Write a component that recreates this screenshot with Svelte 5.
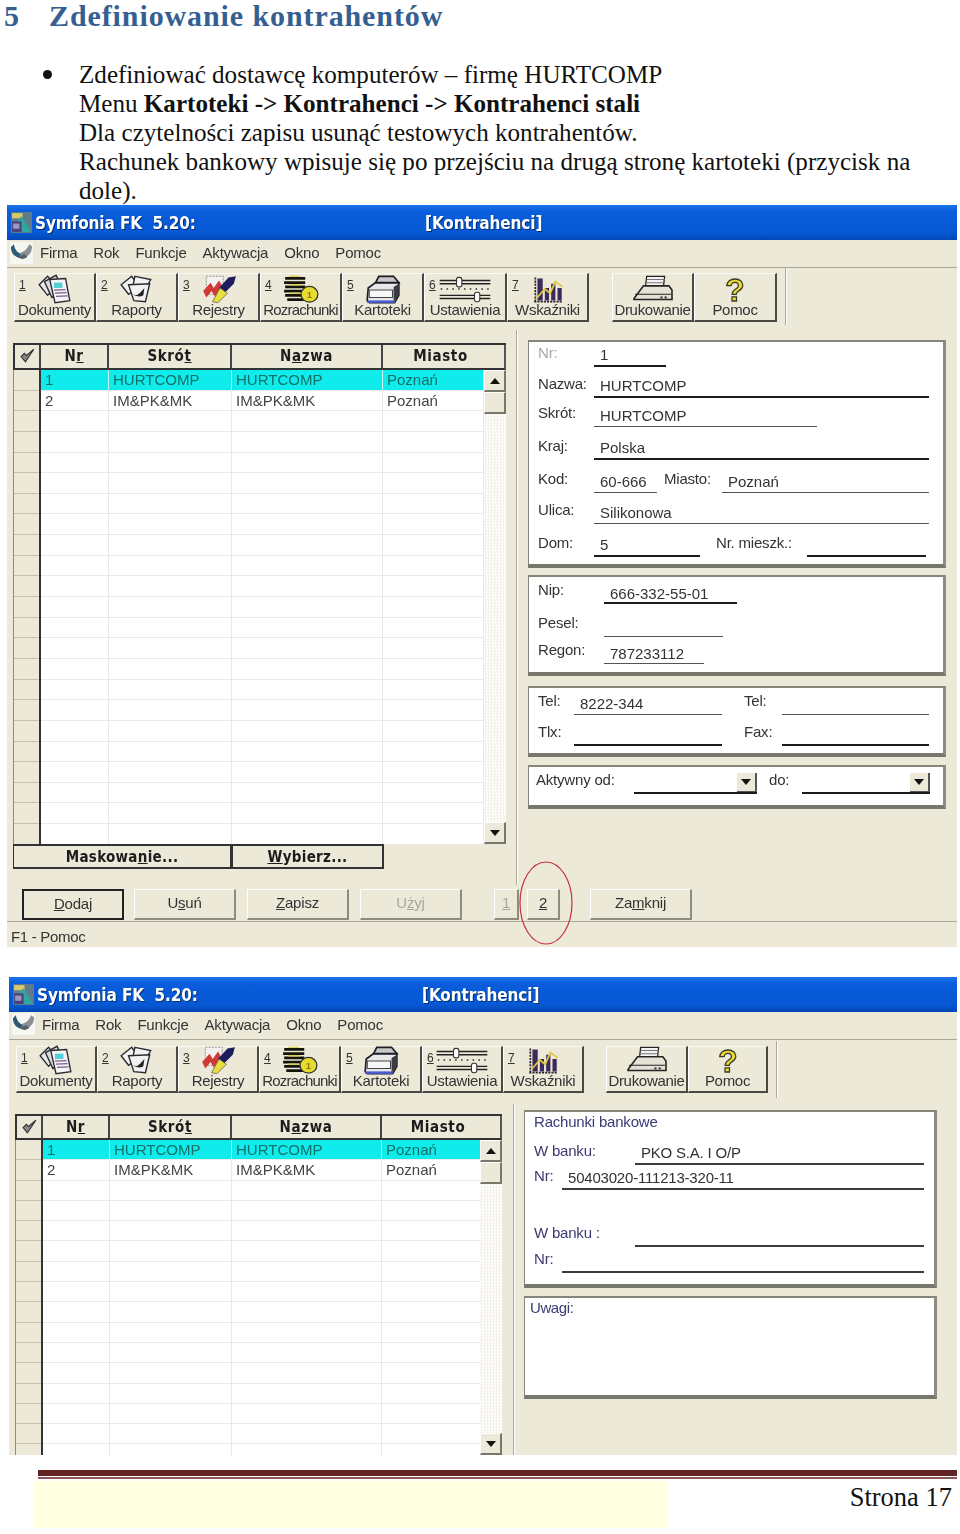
<script>
  const menu = ['Firma', 'Rok', 'Funkcje', 'Aktywacja', 'Okno', 'Pomoc'];

  const tools1 = [
    { n: '1', label: 'Dokumenty', icon: 'docs', w: 82 },
    { n: '2', label: 'Raporty', icon: 'reports', w: 82 },
    { n: '3', label: 'Rejestry', icon: 'pen', w: 82 },
    { n: '4', label: 'Rozrachunki', icon: 'coins', w: 82, narrow: true },
    { n: '5', label: 'Kartoteki', icon: 'cards', w: 82 },
    { n: '6', label: 'Ustawienia', icon: 'sliders', w: 83 },
    { n: '7', label: 'Wskaźniki', icon: 'chart', w: 82 }
  ];
  const extras1 = [
    { label: 'Drukowanie', icon: 'printer', w: 82 },
    { label: 'Pomoc', icon: 'help', w: 83 }
  ];
  const tools2 = tools1.map((t, i) => ({ ...t, w: i === 3 ? 82 : 81 }));
  const extras2 = [
    { label: 'Drukowanie', icon: 'printer', w: 82 },
    { label: 'Pomoc', icon: 'help', w: 80 }
  ];

  const rows = [
    { nr: '1', skrot: 'HURTCOMP', nazwa: 'HURTCOMP', miasto: 'Poznań', on: true },
    { nr: '2', skrot: 'IM&PK&MK', nazwa: 'IM&PK&MK', miasto: 'Poznań' },
    ...Array.from({ length: 21 }, () => ({ nr: '', skrot: '', nazwa: '', miasto: '' }))
  ];

  // each row: height up to the field line, then label/field pairs from the left
  const addressRows = [
    { h: 25, items: [{ label: 'Nr:', w: 58, dim: true }, { value: '1', w: 72 }] },
    { h: 31, items: [{ label: 'Nazwa:', w: 58 }, { value: 'HURTCOMP', w: 335 }] },
    { h: 29, items: [{ label: 'Skrót:', w: 58 }, { value: 'HURTCOMP', w: 223, soft: true }] },
    { h: 33, items: [{ label: 'Kraj:', w: 58 }, { value: 'Polska', w: 335 }] },
    { h: 33, items: [{ label: 'Kod:', w: 58 }, { value: '60-666', w: 63, soft: true }, { label: 'Miasto:', w: 65, pad: 7 }, { value: 'Poznań', w: 207, soft: true }] },
    { h: 31, items: [{ label: 'Ulica:', w: 58 }, { value: 'Silikonowa', w: 335, soft: true }] },
    { h: 33, items: [{ label: 'Dom:', w: 58 }, { value: '5', w: 106 }, { label: 'Nr. mieszk.:', w: 107, pad: 16 }, { value: '', w: 119 }] }
  ];
  const taxRows = [
    { h: 27, items: [{ label: 'Nip:', w: 68 }, { value: '666-332-55-01', w: 133, tight: true }] },
    { h: 33, items: [{ label: 'Pesel:', w: 68 }, { value: '', w: 119, soft: true }] },
    { h: 27, items: [{ label: 'Regon:', w: 68 }, { value: '787233112', w: 100, soft: true, tight: true }] }
  ];
  const phoneRows = [
    { h: 27, items: [{ label: 'Tel:', w: 38 }, { value: '8222-344', w: 148, soft: true }, { label: 'Tel:', w: 60, pad: 22 }, { value: '', w: 147, soft: true }] },
    { h: 31, items: [{ label: 'Tlx:', w: 38 }, { value: '', w: 148 }, { label: 'Fax:', w: 60, pad: 22 }, { value: '', w: 147 }] }
  ];
  const activeRows = [
    { h: 27, items: [{ label: 'Aktywny od:', w: 98, pad: 0 }, { value: '', w: 123, drop: true }, { label: 'do:', w: 45, pad: 12 }, { value: '', w: 128, drop: true }] }
  ];
  const bankRows = [
    { h: 53, items: [{ label: 'W banku:', w: 103 }, { value: 'PKO S.A. I O/P', w: 289 }] },
    { h: 25, items: [{ label: 'Nr:', w: 30 }, { value: '50403020-111213-320-11', w: 362 }] },
    { h: 57, items: [{ label: 'W banku :', w: 103 }, { value: '', w: 289 }] },
    { h: 26, items: [{ label: 'Nr:', w: 30 }, { value: '', w: 362 }] }
  ];
</script>

{#snippet icon(name)}
  <svg class="tool-icon" viewBox="0 0 36 28" aria-hidden="true">
    {#if name === 'docs'}
      <g stroke="#2a2a33" stroke-width="1.3">
        <path d="M3 10 11 2 19 12 11 20Z" fill="#e8e8e8" />
        <path d="M8 7 19 1 26 16 15 22Z" fill="#dcdcdc" />
        <path d="M13 5 28 4 32 25 18 27Z" fill="#f4f4f4" />
      </g>
      <path d="M17 8h8v5h-8z" fill="#4fd0d6" />
      <path d="M17 15l11-.5M18 18l11-.5M19 21l11-.5" stroke="#7a5a8c" stroke-width="1.2" />
    {:else if name === 'reports'}
      <g stroke="#2a2a33" stroke-width="1.3" fill="#f2f2f0">
        <path d="M3 10 13 2 20 12 10 19Z" />
        <path d="M16 2 31 5 26 14 14 12Z" />
        <path d="M10 10 30 9 26 26 15 25Z" />
      </g>
      <path d="M14 19c4 2 6 0 11-6l-1 7c-3 2-7 1-10-1Z" fill="#222" />
    {:else if name === 'pen'}
      <path d="M6 2h16v17H6z" fill="#f6f0f0" stroke="#999" stroke-dasharray="2 1" />
      <path d="M3 16 10 8l3 5 5-7 3 5-7 10-3-5-5 6Z" fill="#cf3a36" />
      <path d="M18 13 27 3 34 2 32 9 23 18Z" fill="#1d1d5c" />
      <path d="M12 26 19 13 26 18 17 27Z" fill="#e8df3c" stroke="#555" stroke-width=".7" />
    {:else if name === 'coins'}
      <g stroke="#14140a" stroke-width="2.6">
        <path d="M3 4h19M2 8h20M3 12h19M2 16h20M3 20h19M5 24h16" />
      </g>
      <path d="M7 2h10M7 10h11M7 18h10" stroke="#d7cf50" stroke-width="1.3" />
      <ellipse cx="26" cy="19" rx="8" ry="7.500" fill="#e6dc2e" stroke="#333" stroke-width="1.2" />
      <text x="26" y="23" class="coin">1</text>
    {:else if name === 'cards'}
      <path d="M3 25 4 13 11 8 33 8 33 20 29 27H5Z" fill="#e8e8ea" stroke="#1c1c24" stroke-width="1.6" />
      <path d="M14 2h14l5 6H11Z" fill="#c8c8cc" stroke="#1c1c24" stroke-width="1.6" />
      <path d="M5 15h22v7H5z" fill="#f8f8f8" stroke="#444" />
      <path d="M3 26h26" stroke="#4a5ad0" stroke-width="2.4" />
      <path d="M28 12 33 9v11l-5 6Z" fill="#3a3a40" />
    {:else if name === 'sliders'}
      <path d="M-6 6h48M-6 9h48M-6 20h48M-6 23h48" stroke="#222" stroke-width="1.3" />
      <path d="M-5 14h46" stroke="#333" stroke-width="1.3" stroke-dasharray="1.500 4" />
      <rect x="10" y="3" width="5" height="9" rx="2" fill="#fff" stroke="#333" />
      <rect x="27" y="17" width="5" height="9" rx="2" fill="#fff" stroke="#333" />
    {:else if name === 'chart'}
      <path d="M6 3v23M5 26h27" stroke="#222" stroke-width="1.6" stroke-dasharray="2 1" />
      <path d="M8 4h5v21H8zM15 13h4v12h-4zM21 9h4v16h-4zM27 13h4v12h-4z" fill="#3c2a5a" />
      <path d="M7 23 15 14 20 18 25 7 32 12" fill="none" stroke="#e0c840" stroke-width="1.7" />
    {:else if name === 'printer'}
      <path d="M12 2h17l-1 9H11Z" fill="#f2f2f2" stroke="#222" stroke-width="1.2" />
      <path d="M12 5h17M12 8h16" stroke="#777" />
      <path d="M0 23 9 11h24l3 4v9H0Z" fill="#e4e2d4" stroke="#222" stroke-width="1.5" />
      <path d="M1 19h34" stroke="#222" />
      <path d="M25 22h2M29 22h2" stroke="#222" stroke-width="1.6" />
    {:else if name === 'help'}
      <text x="18" y="25" class="qmark">?</text>
    {/if}
  </svg>
{/snippet}

{#snippet formRows(list)}
  {#each list as row}
    <div class="row" style="height:{row.h}px">
      {#each row.items as item}
        {#if item.label}
          <span class="lab" class:dim={item.dim} style="width:{item.w}px;padding-left:{item.pad ?? 2}px">{item.label}</span>
        {:else}
          <span class="field" class:soft={item.soft} class:tight={item.tight} style="width:{item.w}px">
            {item.value}
            {#if item.drop}<i class="drop"><b class="tri down"></b></i>{/if}
          </span>
        {/if}
      {/each}
    </div>
  {/each}
{/snippet}

{#snippet chrome(tools, extras)}
  <div class="title">
    <svg class="app" viewBox="0 0 22 22" aria-hidden="true">
      <path d="M1 1h20v20H1z" fill="#5e7c8c" />
      <path d="M2 2h10v5H2z" fill="#d8c86a" />
      <path d="M11 5l9 15h-8L7 9z" fill="#2fa6a0" />
      <path d="M2 10h9v10H2z" fill="#4b3f7a" />
      <path d="M3 12h6v5H3z" fill="#9a9ac0" />
    </svg>
    <span class="app-name">Symfonia FK&nbsp; 5.20:</span>
    <span class="doc-name">[Kontrahenci]</span>
  </div>
  <div class="menu">
    <span class="logo">
      <svg viewBox="0 0 24 20" aria-hidden="true">
        <path d="M1 5c0 6 3 9 8 11l3-4C8 11 5 8 4 2Z" fill="#2f5a76" />
        <path d="M23 4c0 6-3 10-8 12l-5-5c5-1 8-4 10-9Z" fill="#8a9096" />
        <path d="M8 15c3 3 7 3 10 0l-3-3-3 1Z" fill="#55606a" />
      </svg>
    </span>
    {#each menu as item}<span class="menu-item">{item}</span>{/each}
  </div>
  <div class="toolbar">
    <div class="tool-group">
      {#each tools as t}
        <div class="tool" style="width:{t.w}px">
          <u class="tool-n">{t.n}</u>
          {@render icon(t.icon)}
          <span class:narrow={t.narrow}>{t.label}</span>
        </div>
      {/each}
    </div>
    <div class="tool-group second">
      {#each extras as t}
        <div class="tool" style="width:{t.w}px">
          {@render icon(t.icon)}
          <span>{t.label}</span>
        </div>
      {/each}
    </div>
    <div class="tool-end"></div>
  </div>
{/snippet}

{#snippet list()}
  <div class="table">
    <div class="thead">
      <span class="mark">
        <svg viewBox="0 0 16 16" aria-hidden="true"><path d="M2 9 6 14 14 2 7 8 5 6Z" fill="#888" stroke="#333" /></svg>
      </span>
      <span>N<u>r</u></span>
      <span>Skró<u>t</u></span>
      <span>N<u>a</u>zwa</span>
      <span>Miasto</span>
    </div>
    <div class="tbody">
      {#each rows as r}
        <div class="tr" class:on={r.on}>
          <span class="gut"></span>
          <span>{r.nr}</span>
          <span>{r.skrot}</span>
          <span>{r.nazwa}</span>
          <span>{r.miasto}</span>
        </div>
      {/each}
      <div class="scroll">
        <span class="sbtn"><b class="tri up"></b></span>
        <span class="sbtn"></span>
        <span class="strack"></span>
        <span class="sbtn"><b class="tri down"></b></span>
      </div>
    </div>
  </div>
{/snippet}

<div class="page">
  <h1><span class="h-num">5</span>Zdefiniowanie kontrahentów</h1>
  <ul>
    <li>
      Zdefiniować dostawcę komputerów – firmę HURTCOMP<br />
      Menu <strong>Kartoteki -&gt; Kontrahenci -&gt; Kontrahenci stali</strong><br />
      Dla czytelności zapisu usunąć testowych kontrahentów.<br />
      Rachunek bankowy wpisuje się po przejściu na drugą stronę kartoteki (przycisk na dole).
    </li>
  </ul>

  <section class="shot one">
    {@render chrome(tools1, extras1)}
    <div class="body">
      <div class="left">
        {@render list()}
        <div class="under">
          <span class="under-btn wide">Maskowa<u>n</u>ie...</span>
          <span class="under-btn"><u>W</u>ybierz...</span>
        </div>
      </div>
      <div class="right">
        <div class="panel address">{@render formRows(addressRows)}</div>
        <div class="panel tax">{@render formRows(taxRows)}</div>
        <div class="panel phone">{@render formRows(phoneRows)}</div>
        <div class="panel active">{@render formRows(activeRows)}</div>
      </div>
    </div>
    <div class="actions">
      <span class="btn default"><u>D</u>odaj</span>
      <span class="btn"><span>U<u>s</u>uń</span></span>
      <span class="btn save"><u>Z</u>apisz</span>
      <span class="btn use off">U<u>ż</u>yj</span>
      <span class="btn page-1 off"><u>1</u></span>
      <span class="btn page-2"><u>2</u></span>
      <span class="btn close">Za<u>m</u>knij</span>
      <svg class="ring" viewBox="0 0 56 86" aria-hidden="true">
        <ellipse cx="28" cy="43" rx="26" ry="41" fill="none" stroke="#c8303c" stroke-width="1.2" />
      </svg>
    </div>
    <div class="status">F1 - Pomoc</div>
  </section>

  <section class="shot two">
    {@render chrome(tools2, extras2)}
    <div class="body">
      <div class="left">{@render list()}</div>
      <div class="right">
        <div class="panel bank">
          <span class="panel-title">Rachunki bankowe</span>
          {@render formRows(bankRows)}
        </div>
        <div class="panel notes"><span class="lab">Uwagi:</span></div>
      </div>
    </div>
  </section>

  <footer>
    <div class="rule"></div>
    <div class="foot">
      <div class="note"></div>
      <span>Strona 17</span>
    </div>
  </footer>
</div>

<style>
  :global(body) {
    margin: 0;
    background: #fff;
  }

  .page {
    width: 960px;
    height: 1534px;
    overflow: hidden;
    position: relative;
  }

  h1 {
    margin: 0;
    height: 33px;
    padding-left: 4px;
    font: bold 30px/31px "Liberation Serif", serif;
    letter-spacing: 0.9px;
    color: #365f91;
    display: flex;
  }

  .h-num {
    width: 45px;
  }

  ul {
    margin: 0;
    padding: 27px 40px 0 79px;
    height: 145px;
    font: 25.100px/29.100px "Liberation Serif", serif;
    color: #111;
    list-style: none;
    position: relative;
  }

  ul::before {
    content: '';
    position: absolute;
    left: 43px;
    top: 37px;
    width: 9px;
    height: 9px;
    border-radius: 50%;
    background: #111;
  }

  /* window screenshots */
  .shot {
    display: flex;
    flex-direction: column;
    background: #ece9d8;
    font: 15px/17px "Liberation Sans", sans-serif;
    color: #222;
    filter: blur(0.4px);
    overflow: hidden;
  }

  .shot.one {
    margin-left: 7px;
    width: 950px;
    height: 742px;
  }

  .shot.two {
    margin: 30px 0 0 9px;
    width: 948px;
    height: 478px;
  }

  .title {
    flex: none;
    height: 35px;
    display: flex;
    align-items: center;
    background: linear-gradient(#1c74ea, #0a5ddb 18%, #0658d4 80%, #0446b4);
    color: #fff;
    font: bold 17px/20px "DejaVu Sans Condensed", "DejaVu Sans", sans-serif;
    letter-spacing: -0.1px;
    text-shadow: 1px 1px 0 #06306e;
  }

  .app {
    width: 23px;
    height: 23px;
    margin: 0 2px 0 3px;
  }

  .app-name {
    width: 390px;
  }

  .two .app-name {
    width: 385px;
  }

  .menu {
    flex: none;
    height: 28px;
    display: flex;
    align-items: center;
    padding-bottom: 2px;
    border-bottom: 1px solid #a9a694;
    box-sizing: border-box;
    gap: 16px;
    color: #333;
    letter-spacing: -0.2px;
  }

  .two .menu {
    padding-bottom: 3px;
  }

  .logo {
    width: 23px;
    height: 22px;
    margin: 0 -9px 0 3px;
    background: #f6f6f2;
  }

  .logo svg {
    display: block;
    width: 23px;
    height: 20px;
  }

  .toolbar {
    flex: none;
    height: 62px;
    display: flex;
    align-items: flex-start;
    padding: 5px 0 0 7px;
    box-sizing: border-box;
  }

  .two .toolbar {
    padding-top: 6px;
    height: 64px;
  }

  .tool-group {
    display: flex;
  }

  .tool-group.second {
    margin-left: 23px;
  }

  .two .tool-group.second {
    margin-left: 22px;
  }

  .tool {
    position: relative;
    height: 49px;
    box-sizing: border-box;
    display: flex;
    flex-direction: column;
    align-items: center;
    justify-content: flex-end;
    padding-bottom: 2px;
    border-left: 1px solid #fff;
    border-right: 2px solid #4a4a44;
    border-bottom: 2px solid #4a4a44;
    border-top: 1px solid #fbfaf2;
    color: #333;
  }

  .two .tool {
    height: 47px;
  }

  .tool-n {
    position: absolute;
    left: 4px;
    top: 5px;
    font-size: 12px;
    line-height: 13px;
  }

  .tool-icon {
    width: 38px;
    height: 30px;
    margin-bottom: -3px;
    flex: none;
    overflow: visible;
  }

  .tool span {
    white-space: nowrap;
    font-size: 15px;
    margin: 0 -4px;
    letter-spacing: -0.3px;
  }

  .tool span.narrow {
    letter-spacing: -0.8px;
  }

  .coin {
    font: bold 9px "Liberation Sans", sans-serif;
    text-anchor: middle;
    fill: #8a7a10;
  }

  .qmark {
    font: bold 30px "Liberation Sans", sans-serif;
    text-anchor: middle;
    fill: #e8d83a;
    stroke: #3a3a24;
    stroke-width: 1.2;
  }

  .tool-end {
    width: 1px;
    height: 57px;
    margin: -5px 0 0 8px;
    background: #aca899;
    border-right: 1px solid #fff;
  }

  .body {
    flex: 1;
    min-height: 0;
    display: flex;
    align-items: stretch;
  }

  .left {
    width: 493px;
    margin-left: 6px;
    padding-top: 13px;
    display: flex;
    flex-direction: column;
  }

  .two .left {
    margin-left: 6px;
    width: 487px;
    padding-top: 10px;
  }

  .table {
    height: 501px;
    display: flex;
    flex-direction: column;
    border-top: 2px solid #333;
    box-sizing: border-box;
    overflow: hidden;
  }

  .two .table {
    height: auto;
    flex: 1;
  }

  .tr {
    display: grid;
    grid-template-columns: 28px 68px 123px 151px 1fr;
  }

  .two .tr {
    grid-template-columns: 28px 67px 122px 150px 1fr;
  }

  .thead {
    display: grid;
    grid-template-columns: 26px 68px 123px 151px 1fr;
    flex: none;
    height: 23px;
    font: bold 15px/22px "DejaVu Sans Condensed", "DejaVu Sans", sans-serif;
    color: #1c1c1c;
    text-align: center;
    border-left: 2px solid #333;
    border-bottom: 2px solid #333;
    border-right: 2px solid #555;
  }

  .two .thead {
    grid-template-columns: 26px 67px 122px 150px 1fr;
    height: 22px;
  }

  .thead span {
    border-right: 2px solid #444;
    letter-spacing: 0.6px;
  }

  .thead span:last-child {
    border-right: 0;
    padding-right: 6px;
  }

  .mark svg {
    display: block;
    width: 17px;
    height: 17px;
    margin: 2px 0 0 4px;
  }

  .tbody {
    flex: 1;
    min-height: 0;
    position: relative;
    background: #fff;
    overflow: hidden;
  }

  .tr {
    height: 20.650px;
    box-sizing: border-box;
    line-height: 19px;
    border-bottom: 1px solid #e9e9e6;
    margin-right: 22px;
    color: #444;
  }

  .two .tr {
    margin-right: 20px;
    height: 20.300px;
  }

  .tr span {
    border-right: 1px solid #e9e9e6;
    padding-left: 4px;
    white-space: nowrap;
    overflow: hidden;
  }

  .tr .gut {
    background: #ece9d8;
    border-left: 1px solid #8c8c80;
    border-right: 2px solid #333;
    box-shadow: inset 0 -1px 0 #c4c1b0;
    padding: 0;
    margin-bottom: -1px;
  }

  .tr.on {
    background: #10ecec;
    color: #127068;
  }

  .tr.on span {
    border-right-color: #c8f4f4;
  }

  .tr.on .gut {
    border-right-color: #333;
  }

  /* scrollbar sits over the right end of the rows */
  .scroll {
    position: absolute;
    right: 0;
    top: 0;
    bottom: 0;
    width: 22px;
    display: flex;
    flex-direction: column;
  }

  .sbtn {
    flex: none;
    height: 22px;
    background: #ece9d8;
    border-top: 1px solid #fff;
    border-left: 1px solid #fff;
    border-right: 2px solid #77776c;
    border-bottom: 2px solid #77776c;
    box-sizing: border-box;
    display: flex;
    align-items: center;
    justify-content: center;
  }

  .strack {
    flex: 1;
    background-color: #fff;
    background-image: conic-gradient(#f4f2e8 25%, transparent 0 50%, #f4f2e8 0 75%, transparent 0);
    background-size: 3px 3px;
  }

  .tri {
    width: 0;
    height: 0;
    border-left: 5px solid transparent;
    border-right: 5px solid transparent;
  }

  .tri.up {
    border-bottom: 6px solid #111;
  }

  .tri.down {
    border-top: 6px solid #111;
  }

  .under {
    display: flex;
    height: 25px;
    font: bold 15px/24px "DejaVu Sans Condensed", "DejaVu Sans", sans-serif;
    color: #1c1c1c;
  }

  .under-btn {
    width: 152px;
    box-sizing: border-box;
    text-align: center;
    border: 1px solid #333;
    border-top: 2px solid #333;
    border-bottom-width: 2px;
    border-right-width: 2px;
    letter-spacing: 0.3px;
    line-height: 23px;
  }

  .under-btn.wide {
    width: 219px;
  }

  .right {
    flex: none;
    margin-left: 10px;
    padding: 10px 0 0 11px;
    border-left: 1px solid #aca899;
    box-shadow: inset 1px 0 0 #fff;
    display: flex;
    flex-direction: column;
  }

  .two .right {
    margin-left: 11px;
    padding: 6px 0 0 10px;
  }

  .panel {
    width: 418px;
    box-sizing: border-box;
    background: #fff;
    border-top: 2px solid #85857a;
    border-left: 1px solid #85857a;
    border-right: 3px solid #8c8c80;
    border-bottom: 4px solid #77776c;
    padding: 0 0 0 7px;
  }

  .address {
    height: 228px;
  }

  .tax {
    height: 101px;
    margin-top: 7px;
  }

  .phone {
    height: 71px;
    margin-top: 10px;
  }

  .active {
    height: 44px;
    margin-top: 8px;
  }

  .row {
    display: flex;
    align-items: flex-end;
  }

  .lab {
    flex: none;
    box-sizing: border-box;
    margin-bottom: 6px;
    white-space: nowrap;
    color: #333;
    letter-spacing: -0.2px;
  }

  .lab.dim {
    color: #a8a8a8;
  }

  .field {
    flex: none;
    position: relative;
    box-sizing: border-box;
    min-height: 19px;
    padding: 0 0 2px 6px;
    border-bottom: 2px solid #1c1c1c;
    color: #333;
    line-height: 17px;
    white-space: nowrap;
  }

  .field.tight {
    padding-bottom: 0;
  }

  .field.soft {
    border-bottom-color: #55554f;
    border-bottom-width: 1px;
  }

  .drop {
    position: absolute;
    right: 0;
    bottom: 0;
    width: 20px;
    height: 19px;
    display: flex;
    align-items: center;
    justify-content: center;
    background: #ece9d8;
    border-right: 2px solid #555;
    border-bottom: 1px solid #555;
    box-sizing: border-box;
  }

  .bank {
    height: 178px;
    width: 413px;
    position: relative;
    color: #3a3a6e;
  }

  .bank .field {
    letter-spacing: -0.2px;
    border-bottom-color: #3c3c3c;
  }

  .bank .lab,
  .notes .lab {
    color: #3a3a70;
  }

  .panel-title {
    position: absolute;
    left: 9px;
    top: 1px;
    color: #3a3a78;
    letter-spacing: -0.2px;
  }

  .notes {
    height: 103px;
    width: 413px;
    margin-top: 8px;
    padding-left: 5px;
  }

  .notes .lab {
    display: block;
    letter-spacing: -0.4px;
    margin-top: 1px;
  }

  .actions {
    flex: none;
    height: 33px;
    margin-top: 4px;
    padding-left: 15px;
    display: flex;
    gap: 10px;
    position: relative;
    border-bottom: 1px solid #aca899;
    box-sizing: border-box;
  }

  .btn {
    width: 102px;
    height: 31px;
    padding-bottom: 3px;
    box-sizing: border-box;
    display: flex;
    align-items: center;
    justify-content: center;
    border-top: 1px solid #fff;
    border-left: 1px solid #fff;
    border-right: 2px solid #8c8c80;
    border-bottom: 2px solid #8c8c80;
    letter-spacing: -0.2px;
    color: #333;
  }

  .btn.default {
    border: 2px solid #222;
  }

  .btn.off {
    color: #aaa89a;
  }

  .btn.save,
  .btn.use {
    margin-left: 1px;
  }

  .btn.page-1 {
    width: 25px;
    margin-left: 22px;
  }

  .btn.page-2 {
    width: 33px;
    margin-left: -2px;
  }

  .btn.close {
    margin-left: 20px;
  }

  /* hand drawn circle over the page button */
  .ring {
    position: absolute;
    left: 511px;
    top: -29px;
    width: 56px;
    height: 86px;
    overflow: visible;
  }

  .status {
    flex: none;
    height: 25px;
    padding-left: 4px;
    line-height: 29px;
    color: #333;
    letter-spacing: -0.3px;
  }

  footer {
    margin: 15px 0 0 38px;
  }

  .rule {
    height: 6px;
    background: #622423;
    border-bottom: 1px solid #fff;
    box-shadow: 0 2px 0 #8a5a5a;
    margin-bottom: 4px;
    width: 919px;
  }

  .foot {
    display: flex;
    margin-left: -4px;
    align-items: flex-start;
  }

  .note {
    width: 634px;
    height: 47px;
    background: #ffffe2;
  }

  .foot span {
    margin-left: auto;
    padding: 1px 8px 0 0;
    font: 26.500px/30px "Liberation Serif", serif;
    color: #111;
  }
</style>
